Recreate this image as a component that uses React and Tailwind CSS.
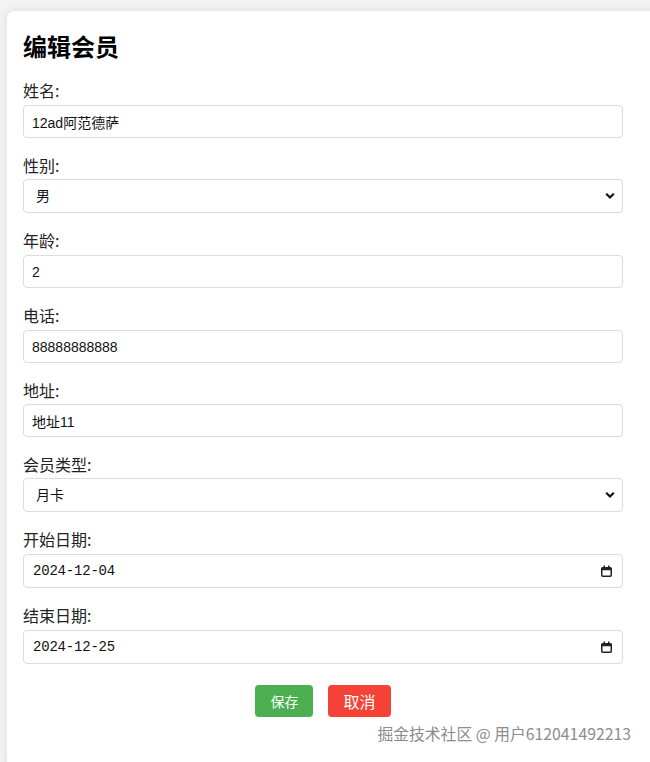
import React, { useState } from 'react';

const fieldFont = { fontFamily: '"Liberation Sans", "Noto Sans CJK SC", sans-serif' };

const Chevron = () => (
  <svg className="pointer-events-none absolute right-[8px] top-1/2 -translate-y-1/2" width="10" height="7" viewBox="0 0 10 7">
    <path d="M1.2 1.2 L5 5 L8.8 1.2" fill="none" stroke="#111" strokeWidth="2.2" />
  </svg>
);

const CalendarIcon = () => (
  <svg className="pointer-events-none absolute right-[11px] top-1/2 -translate-y-1/2" width="11" height="12" viewBox="0 0 11 12">
    <rect x="0.75" y="2.75" width="9.5" height="8.5" rx="1" fill="none" stroke="#222" strokeWidth="1.5" />
    <rect x="0.75" y="2.75" width="9.5" height="2.5" fill="#222" />
    <rect x="2.5" y="0.5" width="1.5" height="2.5" fill="#222" />
    <rect x="7" y="0.5" width="1.5" height="2.5" fill="#222" />
  </svg>
);

const inputCls =
  'block w-[600px] px-[8px] border border-[#dcdcdc] rounded-[4px] text-[14px] text-[#111] bg-white outline-none';

const Field = ({ label, children, gap = 'mb-[5px]' }) => (
  <div className="mb-[17px]">
    <label className={`block ${gap} text-[16px] leading-[20px] text-[#222]`}>{label}</label>
    {children}
  </div>
);

const App = () => {
  const [form, setForm] = useState({
    name: '12ad阿范德萨',
    gender: '男',
    age: '2',
    phone: '88888888888',
    address: '地址11',
    type: '月卡',
    start: '2024-12-04',
    end: '2024-12-25',
  });

  const set = (key) => (e) => setForm({ ...form, [key]: e.target.value });

  return (
    <div
      className="relative h-[762px] overflow-hidden bg-[#f3f3f3] pl-[7px] pt-[11px]"
      style={{ fontFamily: '"Noto Sans CJK SC", "Liberation Sans", sans-serif' }}
    >
      <div className="w-[680px] h-[760px] bg-white rounded-[8px] shadow-[0_0_10px_rgba(0,0,0,0.1)] px-[16px] pt-[20px]">
        <h2 className="text-[24px] leading-[29px] font-bold text-black mb-[20px]">编辑会员</h2>

        <Field label="姓名:">
          <input className={`${inputCls} h-[33px]`} style={fieldFont} value={form.name} onChange={set('name')} />
        </Field>

        <Field label="性别:" gap="mb-[4px]">
          <div className="relative w-[600px]">
            <select
              className={`${inputCls} h-[34px] appearance-none pl-[12px]`}
              style={fieldFont}
              value={form.gender}
              onChange={set('gender')}
            >
              <option>男</option>
              <option>女</option>
            </select>
            <Chevron />
          </div>
        </Field>

        <Field label="年龄:">
          <input className={`${inputCls} h-[33px]`} style={fieldFont} value={form.age} onChange={set('age')} />
        </Field>

        <Field label="电话:">
          <input className={`${inputCls} h-[33px]`} style={fieldFont} value={form.phone} onChange={set('phone')} />
        </Field>

        <Field label="地址:" gap="mb-[4px]">
          <input className={`${inputCls} h-[33px]`} style={fieldFont} value={form.address} onChange={set('address')} />
        </Field>

        <Field label="会员类型:" gap="mb-[4px]">
          <div className="relative w-[600px]">
            <select
              className={`${inputCls} h-[34px] appearance-none pl-[12px]`}
              style={fieldFont}
              value={form.type}
              onChange={set('type')}
            >
              <option>月卡</option>
              <option>季卡</option>
              <option>年卡</option>
            </select>
            <Chevron />
          </div>
        </Field>

        <Field label="开始日期:">
          <div className="relative w-[600px]">
            <input
              className={`${inputCls} h-[34px] pl-[9px] text-[12.5px] tracking-[-0.2px]`}
              style={{ fontFamily: '"Liberation Mono", monospace' }}
              value={form.start}
              onChange={set('start')}
            />
            <CalendarIcon />
          </div>
        </Field>

        <Field label="结束日期:">
          <div className="relative w-[600px]">
            <input
              className={`${inputCls} h-[34px] pl-[9px] text-[12.5px] tracking-[-0.2px]`}
              style={{ fontFamily: '"Liberation Mono", monospace' }}
              value={form.end}
              onChange={set('end')}
            />
            <CalendarIcon />
          </div>
        </Field>

        <div className="w-[600px] flex justify-center gap-[15px] mt-[21px]">
          <button className="h-[32px] px-[15px] rounded-[4px] bg-[#4caf50] text-white text-[14px] leading-[32px]">
            保存
          </button>
          <button className="h-[32px] px-[15px] rounded-[4px] bg-[#f44336] text-white text-[16px] leading-[32px]">
            取消
          </button>
        </div>
      </div>

      <div
        className="absolute right-[19px] top-[723px] text-[15.8px] leading-[22px] text-[#8c8c8c]"
        style={{ textShadow: '0 0 2px #fff, 0 0 2px #fff' }}
      >
        掘金技术社区 @ 用户612041492213
      </div>
    </div>
  );
};

export default App;
